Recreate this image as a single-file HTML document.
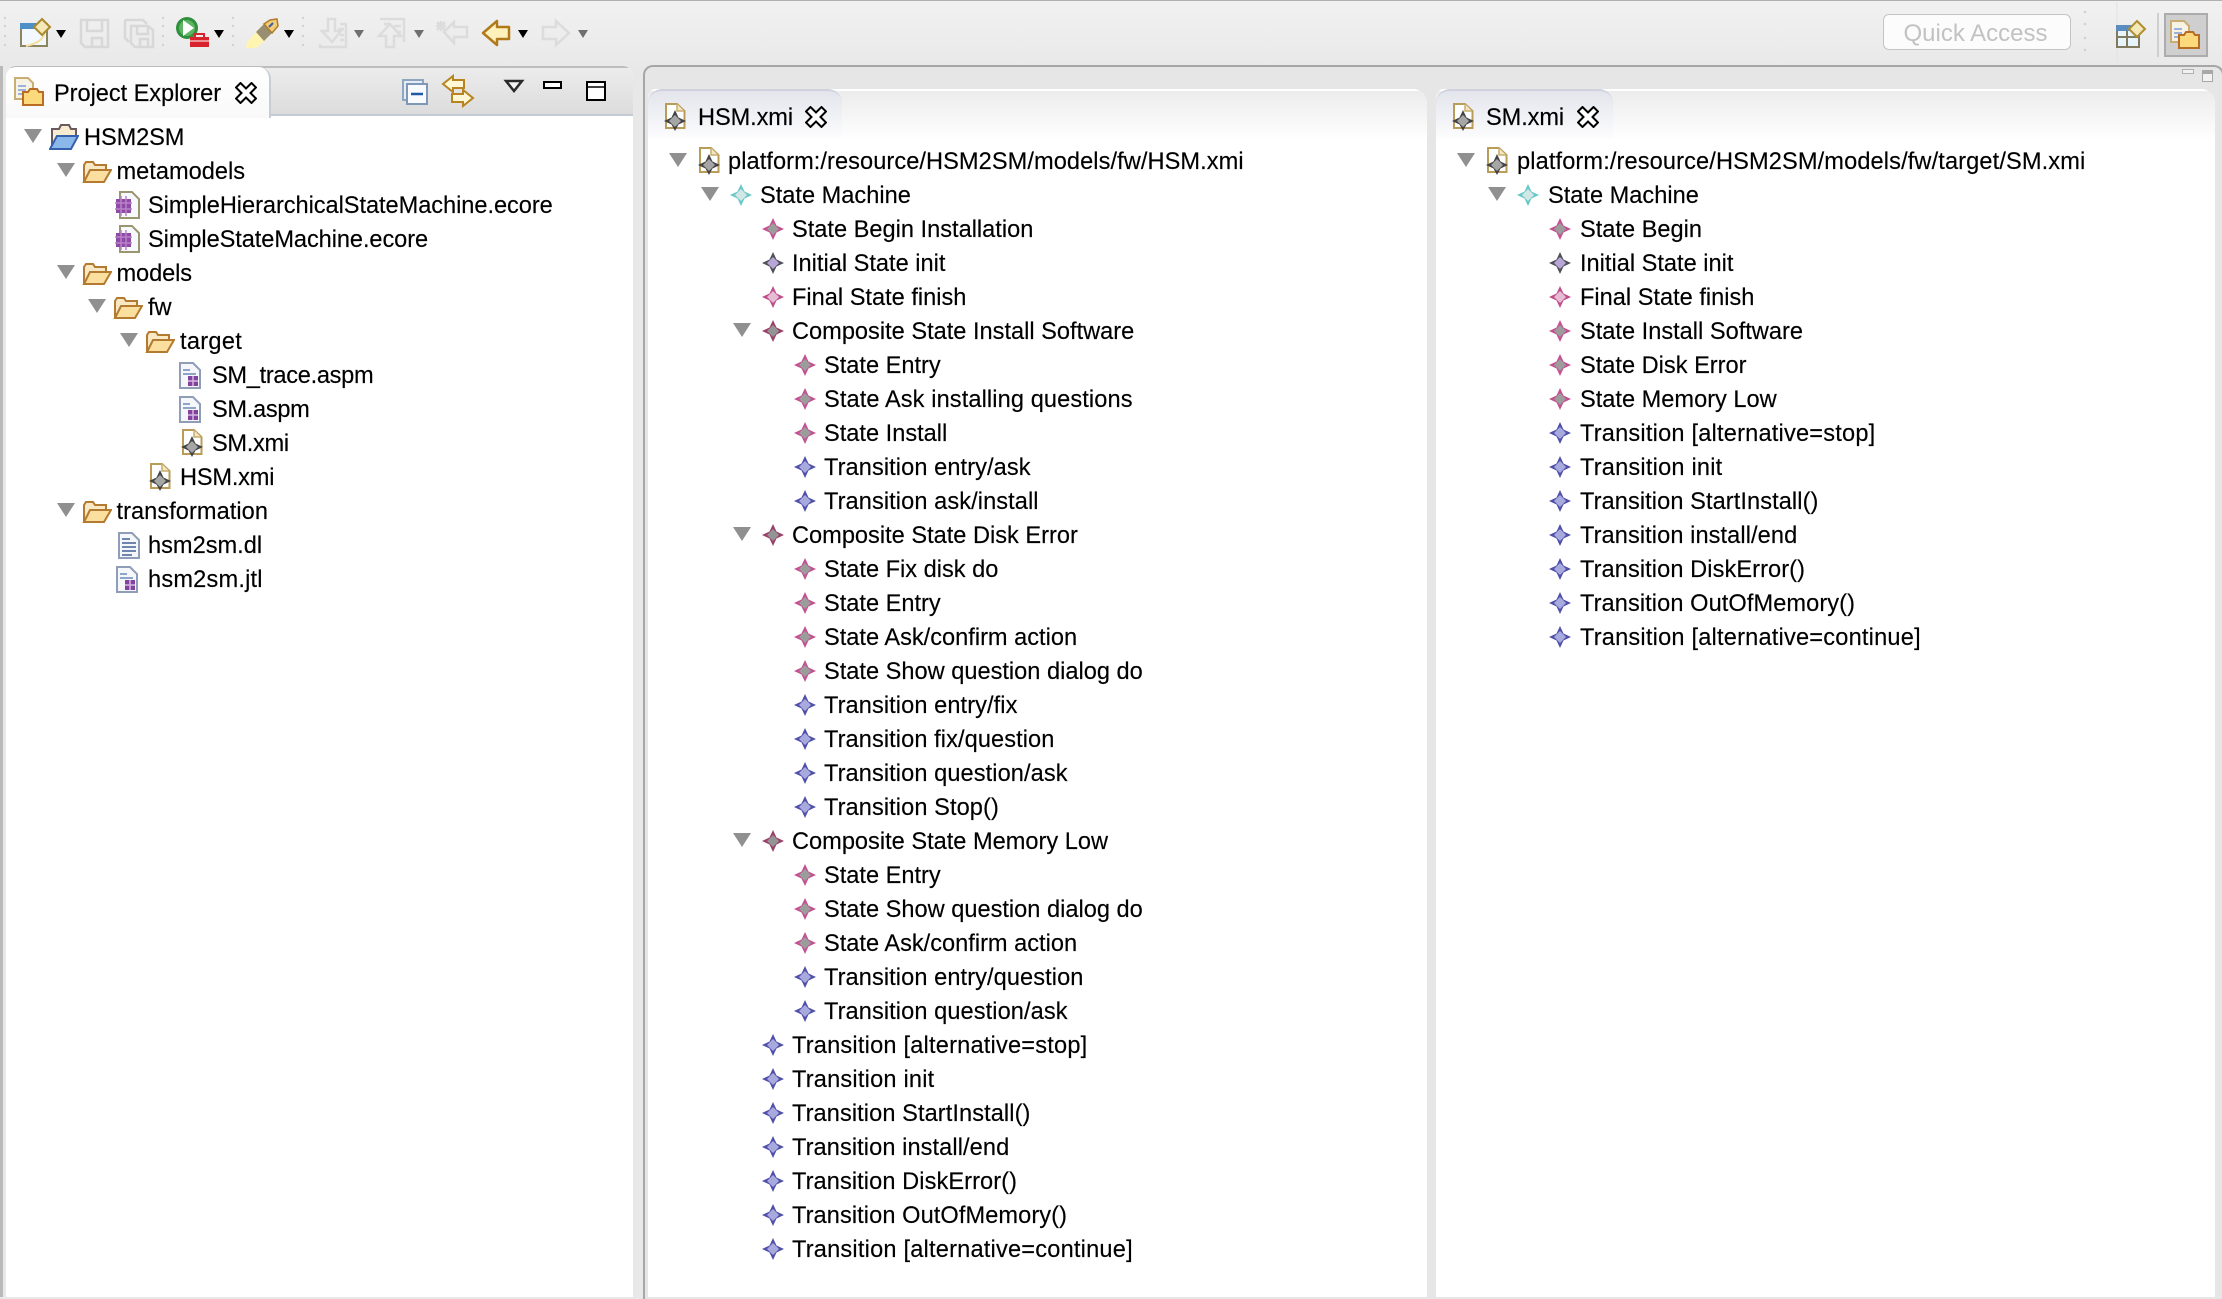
<!DOCTYPE html>
<html><head><meta charset="utf-8"><style>
html,body{margin:0;padding:0}
body{width:2222px;height:1297px;position:relative;overflow:hidden;background:#e8e8e8;font-family:"Liberation Sans",sans-serif;font-size:23.6px;color:#000;filter:blur(.35px);-webkit-text-stroke:.15px #000}
.b{position:absolute}
.r{position:absolute;white-space:nowrap;height:34px;line-height:36px}
.t{letter-spacing:.08px}
.u{letter-spacing:.2px}
.r svg{position:absolute;left:-31px;top:6px;width:22px;height:22px;overflow:visible}
.a:before{content:"";position:absolute;left:-60px;top:9px;border-left:9px solid transparent;border-right:9px solid transparent;border-top:14px solid #909090}
svg.d{position:absolute;overflow:visible}
.f svg{left:-35px;top:7px;width:30px;height:22px}
.e{letter-spacing:-.05px}
.e svg{left:-33px;top:3px;width:25px;height:28px}
.p svg{left:-33px;top:4px;width:22px;height:27px}
.x svg{left:-31px;top:3px;width:22px;height:28px}
.h .r svg{left:-30px}
.h .a:before{left:-59px}
</style></head><body>
<svg width="0" height="0" style="position:absolute"><defs>
<symbol id="st" viewBox="0 0 22 22"><path d="M11 0L14.500 7.500 22 11 14.500 14.500 11 22 7.500 14.500 0 11 7.500 7.500Z" fill="#c4508f"/><path d="M11 5L17 11 11 17 5 11Z" fill="#9c9c9c"/></symbol>
<symbol id="in" viewBox="0 0 22 22"><path d="M11 0L14.500 7.500 22 11 14.500 14.500 11 22 7.500 14.500 0 11 7.500 7.500Z" fill="#4f4f58"/><path d="M11 5L17 11 11 17 5 11Z" fill="#b9a6d8"/></symbol>
<symbol id="fi" viewBox="0 0 22 22"><path d="M11 0L14.500 7.500 22 11 14.500 14.500 11 22 7.500 14.500 0 11 7.500 7.500Z" fill="#c04c8a"/><path d="M11 5L17 11 11 17 5 11Z" fill="#e6bcd4"/></symbol>
<symbol id="co" viewBox="0 0 22 22"><path d="M11 0L14.500 7.500 22 11 14.500 14.500 11 22 7.500 14.500 0 11 7.500 7.500Z" fill="#98406a"/><path d="M11 5L17 11 11 17 5 11Z" fill="#949494"/></symbol>
<symbol id="tr" viewBox="0 0 22 22"><path d="M11 0L14.500 7.500 22 11 14.500 14.500 11 22 7.500 14.500 0 11 7.500 7.500Z" fill="#5050aa"/><path d="M11 5L17 11 11 17 5 11Z" fill="#a8aade"/></symbol>
<symbol id="ma" viewBox="0 0 22 22"><path d="M11 0L14.500 7.500 22 11 14.500 14.500 11 22 7.500 14.500 0 11 7.500 7.500Z" fill="#68c8c8"/><path d="M11 5L17 11 11 17 5 11Z" fill="#d3e6e6"/></symbol>
<symbol id="xm" viewBox="0 0 22 28"><path d="M2 1H13L20.500 8V25H2Z" fill="#fff" stroke="#b89c58" stroke-width="2"/><path d="M13 1V8H20" fill="#f3e6c4" stroke="#c8ae6c" stroke-width="1.500"/><path d="M11 7L14.500 14.500 22 18 14.500 21.500 11 28 7.500 21.500 0 18 7.500 14.500Z" fill="#444"/><path d="M11 12L17 18 11 24 5 18Z" fill="#a6a6a6"/></symbol>
<symbol id="fo" viewBox="0 0 30 22"><path d="M2 21V4L4 1H11L13 4H24V9" fill="#f8e8c4" stroke="#b37a30" stroke-width="2"/><path d="M2 21L8 9H29L22 21Z" fill="#fbdf9e" stroke="#b37a30" stroke-width="2"/></symbol>
<symbol id="pj" viewBox="0 0 30 26"><path d="M3 25V5H10L12 1H20L22 5H27V11" fill="#f7ecd0" stroke="#6a5a60" stroke-width="2"/><path d="M1 25L8 12H29L22 25Z" fill="#8ab8ea" stroke="#3460ac" stroke-width="2"/></symbol>
<symbol id="ec" viewBox="0 0 25 28"><path d="M5 1H17L24 8V27H5Z" fill="#f6f9fd" stroke="#9c9670" stroke-width="2"/><rect x="1" y="8" width="15" height="14" fill="#8e4aa4"/><path d="M6 5V25M11 5V25M0 12H17M0 18H17" stroke="#b881c8" stroke-width="1.500"/></symbol>
<symbol id="ap" viewBox="0 0 22 27"><path d="M1 1H14L21 8V26H1Z" fill="#f5f7fb" stroke="#8f9db8" stroke-width="2"/><path d="M4 8H11M4 12H17" stroke="#8ea5ca" stroke-width="2"/><rect x="9" y="14" width="10" height="10" fill="#8142a0"/><path d="M14 14V24M9 19H19" stroke="#d8b8e0" stroke-width="1.500"/></symbol>
<symbol id="dl" viewBox="0 0 22 27"><path d="M1 1H14L21 8V26H1Z" fill="#f5f7fb" stroke="#8f9db8" stroke-width="2"/><path d="M4 7H12M4 11H18M4 15H18M4 19H18M4 23H14" stroke="#6e85ad" stroke-width="2"/></symbol>
<symbol id="cl" viewBox="0 0 22 22"><path d="M1 5.500L5.500 1 11 6.500 16.500 1 21 5.500 15.500 11 21 16.500 16.500 21 11 15.500 5.500 21 1 16.500 6.500 11Z" fill="#fff" stroke="#000" stroke-width="2"/></symbol>
</defs></svg>

<!-- toolbar -->
<div class="b" style="left:0;top:0;width:2222px;height:66px;background:linear-gradient(#f1f1f1,#e9e9e9)"></div>
<div class="b" style="left:0;top:0;width:2222px;height:1px;background:#b0b0b0"></div>
<svg class="d" style="left:0;top:0" width="2222" height="66">
<g fill="#d5d2c8"><circle cx="5" cy="18" r="1.200"/><circle cx="5" cy="26" r="1.200"/><circle cx="5" cy="36" r="1.200"/><circle cx="5" cy="45" r="1.200"/><circle cx="163" cy="18" r="1.200"/><circle cx="163" cy="26" r="1.200"/><circle cx="163" cy="36" r="1.200"/><circle cx="163" cy="45" r="1.200"/><circle cx="233" cy="18" r="1.200"/><circle cx="233" cy="26" r="1.200"/><circle cx="233" cy="36" r="1.200"/><circle cx="233" cy="45" r="1.200"/><circle cx="303" cy="18" r="1.200"/><circle cx="303" cy="26" r="1.200"/><circle cx="303" cy="36" r="1.200"/><circle cx="303" cy="45" r="1.200"/></g>
<rect x="21" y="24" width="26" height="22" fill="#f3f8fe" stroke="#8c8660" stroke-width="2"/><rect x="20" y="23" width="28" height="6" fill="#4e8fc8"/><path d="M45 30Q45 42 26 46" fill="none" stroke="#f3dfa0" stroke-width="2"/><path d="M42 19L50 27 42 35 34 27Z" fill="#f5e8b8" stroke="#a98a2c" stroke-width="2"/>
<g fill="none" stroke="#d8d8d8" stroke-width="2.500"><path d="M81 20H108V47H85L81 43Z"/><path d="M87 21V31H102V21M92 47V38H102V47"/><path d="M125 20H143L147 24M125 20V38L129 42M131 26H148L153 30V47H135L131 43Z"/><path d="M137 26V34H148V26M140 47V39H148V47"/></g>
<circle cx="187" cy="28" r="11" fill="#2f8f3e"/><circle cx="187" cy="28" r="8" fill="#5cb560"/><path d="M183 20L194 28 183 36Z" fill="#fff"/><rect x="190" y="37" width="19" height="10" fill="#d8232c"/><path d="M195 37V34H204V37" fill="none" stroke="#d8232c" stroke-width="2"/><path d="M190 41H209" stroke="#fff" stroke-width="1"/>
<path d="M246 48L247 42 258 30 268 38 256 48Z" fill="#fff4b0"/><path d="M256 32L264 24 272 33 264 41Z" fill="#9a8e70"/><path d="M264 24L270 20 277 19 278 26 272 33Z" fill="#f3cc7a" stroke="#b07c28" stroke-width="1.500"/><path d="M273 23L269 27" stroke="#3860a0" stroke-width="2"/>
<g fill="none" stroke="#dcdcdc" stroke-width="2.500"><path d="M328 19V31H322L332 42 341 31H335V19Z"/><path d="M340 24H346V47H320V44M338 29H344M340 35H344M340 40H344"/><path d="M386 47V36H379L390 24 401 36H394V47Z"/><path d="M380 19H404V42M384 24H390M394 26H401M398 32H401"/><path d="M454 22L444 32 454 43V37H467V27H454Z"/><path d="M437 22L445 30M445 22L437 30M441 21V31M436 26H446"/><path d="M569 33L556 21V27H543V39H556V45Z"/></g>
<path d="M483 33L497 21V27H509V39H497V45Z" fill="#fff1bc" stroke="#b07a1c" stroke-width="2.500" stroke-linejoin="round"/>
<g fill="#000"><path d="M56 30H66L61 38Z"/><path d="M214 30H224L219 38Z"/><path d="M284 30H294L289 38Z"/><path d="M518 30H528L523 38Z"/></g>
<g fill="#6f6f6f"><path d="M354 30H364L359 38Z"/><path d="M414 30H424L419 38Z"/><path d="M578 30H588L583 38Z"/></g>
</svg>
<div class="b" style="left:1883px;top:14px;height:34px;border:1.500px solid #c4c4c4;border-radius:6px;background:#fcfcfc;line-height:37px;text-align:center;color:#c2c2c2;font-size:24px;-webkit-text-stroke:0;padding-right:3px;box-sizing:content-box;width:183px">Quick Access</div>
<svg class="d" style="left:2080px;top:0" width="142" height="66"><g fill="#d5d2c8"><circle cx="5" cy="12" r="1.300"/><circle cx="5" cy="24" r="1.300"/><circle cx="5" cy="38" r="1.300"/><circle cx="5" cy="50" r="1.300"/></g>
<path d="M37 2V62" stroke="#e2e2e2"/>
<rect x="37" y="26" width="22" height="21" fill="#e8f4fb" stroke="#807a5e" stroke-width="2"/><rect x="36" y="25" width="24" height="6" fill="#5b8cc0"/><path d="M47 31V47M37 37H59" stroke="#807a5e" stroke-width="2"/><path d="M57 21L65 29 57 37 49 29Z" fill="#f5e8b8" stroke="#ad8f30" stroke-width="2"/>
<path d="M78 13V57" stroke="#cfcfcf" stroke-width="2"/></svg>
<div class="b" style="left:2164px;top:13px;width:40px;height:40px;background:#cfcfcf;border:2px solid #acacac"></div>
<svg class="d" style="left:2170px;top:20px;width:30px;height:30px" viewBox="0 0 30 30"><path d="M1 1H14L19 6V22H1Z" fill="#f6f2e4" stroke="#c9ad72" stroke-width="2"/><path d="M4 9H12M4 13H12M4 17H12" stroke="#9cb2dc" stroke-width="2"/><path d="M9 28V15H14L16 12H23L25 15H29V28Z" fill="#fcd97a" stroke="#b86c24" stroke-width="2"/></svg>

<!-- project explorer -->
<div class="b" style="left:0;top:66px;width:3px;height:1231px;background:#b9b9b9"></div>
<div class="b" style="left:6px;top:66px;width:627px;height:1231px;background:#fff;border-radius:10px 10px 0 0;overflow:hidden">
<div class="b" style="left:0;top:0;width:627px;height:50px;background:linear-gradient(#ececec,#dcdcdc);border-top:2px solid #bdbdbd;box-sizing:border-box;border-bottom:2px solid #c4cad4"></div>
<div class="b" style="left:0;top:1px;width:265px;height:51px;background:linear-gradient(#fff,#f9f9f9);border-radius:10px 12px 0 0;border-right:2px solid #c7ccd7;box-sizing:border-box"></div>
</div>
<svg class="d" style="left:14px;top:77px;width:30px;height:30px" viewBox="0 0 30 30"><path d="M1 1H14L19 6V22H1Z" fill="#f6f2e4" stroke="#c9ad72" stroke-width="2"/><path d="M4 9H12M4 13H12M4 17H12" stroke="#9cb2dc" stroke-width="2"/><path d="M9 28V15H14L16 12H23L25 15H29V28Z" fill="#fcd97a" stroke="#b86c24" stroke-width="2"/></svg>
<div class="r" style="left:54px;top:76px;letter-spacing:-.05px">Project Explorer</div>
<svg class="d" style="left:235px;top:82px;width:22px;height:22px"><use href="#cl"/></svg>
<svg class="d" style="left:402px;top:79px;width:26px;height:26px" viewBox="0 0 26 26"><rect x="1" y="1" width="20" height="20" fill="#e4ecf6" stroke="#8fa5c0" stroke-width="2"/><rect x="5" y="5" width="20" height="20" fill="#f8fafd" stroke="#7f98b8" stroke-width="2"/><path d="M9 15H21" stroke="#1c5aa8" stroke-width="2.500"/></svg>
<svg class="d" style="left:442px;top:75px;width:32px;height:32px" viewBox="0 0 32 32"><path d="M1 9L11 1V5H22V13H11V17Z" fill="#fff7d6" stroke="#b88420" stroke-width="2"/><path d="M31 23L21 15V19H10V27H21V31Z" fill="#fff7d6" stroke="#b88420" stroke-width="2"/></svg>
<svg class="d" style="left:504px;top:79px;width:20px;height:14px" viewBox="0 0 20 14"><path d="M2 2H18L10 12Z" fill="#f3f3f3" stroke="#2a2a2a" stroke-width="2.500"/></svg>
<div class="b" style="left:543px;top:81px;width:15px;height:4px;border:2px solid #000;background:#fff"></div>
<svg class="d" style="left:586px;top:81px;width:20px;height:20px" viewBox="0 0 20 20"><rect x="1" y="1" width="18" height="18" fill="#fff" stroke="#000" stroke-width="2"/><path d="M1 6H19" stroke="#000" stroke-width="1.500"/></svg>

<div class="r a f" style="left:84px;top:120px;letter-spacing:-.1px"><svg style="left:-35px;top:4px;height:26px"><use href="#pj"/></svg>HSM2SM</div>
<div class="r a f" style="left:116.500px;top:154px"><svg><use href="#fo"/></svg>metamodels</div>
<div class="r e" style="left:148px;top:188px"><svg><use href="#ec"/></svg>SimpleHierarchicalStateMachine.ecore</div>
<div class="r e" style="left:148px;top:222px;letter-spacing:-.08px"><svg><use href="#ec"/></svg>SimpleStateMachine.ecore</div>
<div class="r a f" style="left:116.500px;top:256px;letter-spacing:-.1px"><svg><use href="#fo"/></svg>models</div>
<div class="r a f" style="left:148px;top:290px"><svg><use href="#fo"/></svg>fw</div>
<div class="r a f" style="left:180px;top:324px;letter-spacing:.3px"><svg><use href="#fo"/></svg>target</div>
<div class="r p" style="left:212px;top:358px;letter-spacing:-.3px"><svg><use href="#ap"/></svg>SM_trace.aspm</div>
<div class="r p" style="left:212px;top:392px;letter-spacing:-.3px"><svg><use href="#ap"/></svg>SM.aspm</div>
<div class="r x" style="left:212px;top:426px;letter-spacing:-.3px"><svg><use href="#xm"/></svg>SM.xmi</div>
<div class="r x" style="left:180px;top:460px;letter-spacing:-.2px"><svg><use href="#xm"/></svg>HSM.xmi</div>
<div class="r a f" style="left:116.500px;top:494px;letter-spacing:.05px"><svg><use href="#fo"/></svg>transformation</div>
<div class="r p" style="left:148px;top:528px"><svg style="left:-30px"><use href="#dl"/></svg>hsm2sm.dl</div>
<div class="r p" style="left:148px;top:562px;letter-spacing:.2px"><svg style="left:-32px"><use href="#ap"/></svg>hsm2sm.jtl</div>

<!-- editor area -->
<div class="b" style="left:643px;top:65px;width:1577px;height:1232px;background:#e6e6e6;border:2px solid #a6a6a6;border-bottom:0;border-radius:10px 10px 0 0"></div>
<div class="b" style="left:2182px;top:69px;width:10px;height:3px;border:1.500px solid #b0b0b0;background:#f2f2f2"></div>
<div class="b" style="left:2202px;top:70px;width:9px;height:7px;border:1.500px solid #a8a8a8;border-top-width:4px;background:#f2f2f2"></div>

<div class="b" style="left:648px;top:89px;width:779px;height:1208px;background:#fff;border-radius:8px 14px 0 0;overflow:hidden"><div style="height:52px;background:linear-gradient(#ececec,#fff);border-top:2px solid #fff;box-sizing:border-box"></div></div>
<div class="b" style="left:648px;top:89px;width:194px;height:50px;box-sizing:border-box;background:linear-gradient(#e3e5ec,#fdfdfe);border-top:2px solid #cfd2de;border-radius:14px 14px 0 0"></div>
<svg class="d" style="left:664px;top:103px;width:22px;height:28px"><use href="#xm"/></svg>
<div class="r" style="left:698px;top:100px;letter-spacing:-.1px">HSM.xmi</div>
<svg class="d" style="left:805px;top:106px;width:22px;height:22px"><use href="#cl"/></svg>

<div class="b" style="left:1436px;top:89px;width:779px;height:1208px;background:#fff;border-radius:8px 14px 0 0;overflow:hidden"><div style="height:52px;background:linear-gradient(#ececec,#fff);border-top:2px solid #fff;box-sizing:border-box"></div></div>
<div class="b" style="left:1436px;top:89px;width:177px;height:50px;box-sizing:border-box;background:linear-gradient(#e3e5ec,#fdfdfe);border-top:2px solid #cfd2de;border-radius:14px 14px 0 0"></div>
<svg class="d" style="left:1452px;top:103px;width:22px;height:28px"><use href="#xm"/></svg>
<div class="r" style="left:1486px;top:100px;letter-spacing:-.1px">SM.xmi</div>
<svg class="d" style="left:1577px;top:106px;width:22px;height:22px"><use href="#cl"/></svg>

<!-- HSM tree -->
<div class="h">
<div class="r a x" style="left:728px;top:144px;letter-spacing:.07px"><svg><use href="#xm"/></svg>platform:/resource/HSM2SM/models/fw/HSM.xmi</div>
<div class="r a" style="left:760px;top:178px"><svg><use href="#ma"/></svg>State Machine</div>
<div class="r" style="left:792px;top:212px"><svg><use href="#st"/></svg>State Begin Installation</div>
<div class="r" style="left:792px;top:246px"><svg><use href="#in"/></svg>Initial State init</div>
<div class="r" style="left:792px;top:280px"><svg><use href="#fi"/></svg>Final State finish</div>
<div class="r a" style="left:792px;top:314px"><svg><use href="#co"/></svg>Composite State Install Software</div>
<div class="r" style="left:824px;top:348px"><svg><use href="#st"/></svg>State Entry</div>
<div class="r" style="left:824px;top:382px;letter-spacing:.1px"><svg><use href="#st"/></svg>State Ask installing questions</div>
<div class="r" style="left:824px;top:416px"><svg><use href="#st"/></svg>State Install</div>
<div class="r t" style="left:824px;top:450px"><svg><use href="#tr"/></svg>Transition entry/ask</div>
<div class="r t" style="left:824px;top:484px"><svg><use href="#tr"/></svg>Transition ask/install</div>
<div class="r a" style="left:792px;top:518px"><svg><use href="#co"/></svg>Composite State Disk Error</div>
<div class="r" style="left:824px;top:552px"><svg><use href="#st"/></svg>State Fix disk do</div>
<div class="r" style="left:824px;top:586px"><svg><use href="#st"/></svg>State Entry</div>
<div class="r" style="left:824px;top:620px"><svg><use href="#st"/></svg>State Ask/confirm action</div>
<div class="r" style="left:824px;top:654px"><svg><use href="#st"/></svg>State Show question dialog do</div>
<div class="r t" style="left:824px;top:688px"><svg><use href="#tr"/></svg>Transition entry/fix</div>
<div class="r t" style="left:824px;top:722px"><svg><use href="#tr"/></svg>Transition fix/question</div>
<div class="r t" style="left:824px;top:756px"><svg><use href="#tr"/></svg>Transition question/ask</div>
<div class="r t" style="left:824px;top:790px"><svg><use href="#tr"/></svg>Transition Stop()</div>
<div class="r a" style="left:792px;top:824px"><svg><use href="#co"/></svg>Composite State Memory Low</div>
<div class="r" style="left:824px;top:858px"><svg><use href="#st"/></svg>State Entry</div>
<div class="r" style="left:824px;top:892px"><svg><use href="#st"/></svg>State Show question dialog do</div>
<div class="r" style="left:824px;top:926px"><svg><use href="#st"/></svg>State Ask/confirm action</div>
<div class="r t" style="left:824px;top:960px"><svg><use href="#tr"/></svg>Transition entry/question</div>
<div class="r t" style="left:824px;top:994px"><svg><use href="#tr"/></svg>Transition question/ask</div>
<div class="r u" style="left:792px;top:1028px"><svg><use href="#tr"/></svg>Transition [alternative=stop]</div>
<div class="r u" style="left:792px;top:1062px"><svg><use href="#tr"/></svg>Transition init</div>
<div class="r t" style="left:792px;top:1096px"><svg><use href="#tr"/></svg>Transition StartInstall()</div>
<div class="r t" style="left:792px;top:1130px"><svg><use href="#tr"/></svg>Transition install/end</div>
<div class="r t" style="left:792px;top:1164px"><svg><use href="#tr"/></svg>Transition DiskError()</div>
<div class="r t" style="left:792px;top:1198px"><svg><use href="#tr"/></svg>Transition OutOfMemory()</div>
<div class="r u" style="left:792px;top:1232px"><svg><use href="#tr"/></svg>Transition [alternative=continue]</div>
</div>

<!-- SM tree -->
<div class="r a x" style="left:1517px;top:144px;letter-spacing:.12px"><svg><use href="#xm"/></svg>platform:/resource/HSM2SM/models/fw/target/SM.xmi</div>
<div class="r a" style="left:1548px;top:178px"><svg><use href="#ma"/></svg>State Machine</div>
<div class="r" style="left:1580px;top:212px"><svg><use href="#st"/></svg>State Begin</div>
<div class="r" style="left:1580px;top:246px"><svg><use href="#in"/></svg>Initial State init</div>
<div class="r" style="left:1580px;top:280px"><svg><use href="#fi"/></svg>Final State finish</div>
<div class="r" style="left:1580px;top:314px"><svg><use href="#st"/></svg>State Install Software</div>
<div class="r" style="left:1580px;top:348px"><svg><use href="#st"/></svg>State Disk Error</div>
<div class="r" style="left:1580px;top:382px"><svg><use href="#st"/></svg>State Memory Low</div>
<div class="r u" style="left:1580px;top:416px"><svg><use href="#tr"/></svg>Transition [alternative=stop]</div>
<div class="r u" style="left:1580px;top:450px"><svg><use href="#tr"/></svg>Transition init</div>
<div class="r t" style="left:1580px;top:484px"><svg><use href="#tr"/></svg>Transition StartInstall()</div>
<div class="r t" style="left:1580px;top:518px"><svg><use href="#tr"/></svg>Transition install/end</div>
<div class="r t" style="left:1580px;top:552px"><svg><use href="#tr"/></svg>Transition DiskError()</div>
<div class="r t" style="left:1580px;top:586px"><svg><use href="#tr"/></svg>Transition OutOfMemory()</div>
<div class="r u" style="left:1580px;top:620px"><svg><use href="#tr"/></svg>Transition [alternative=continue]</div>
</body></html>
